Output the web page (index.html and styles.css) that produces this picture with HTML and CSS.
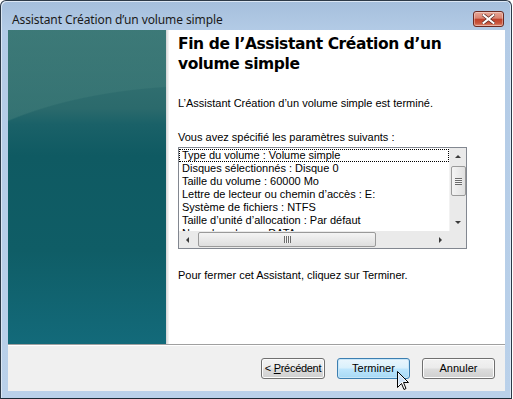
FILE: index.html
```html
<!DOCTYPE html>
<html lang="fr">
<head>
    <meta charset="UTF-8">
    <title>Assistant Création d'un volume simple</title>
    <link rel="stylesheet" href="styles.css">
</head>
<body>
    <div class="window">
        <div class="titlebar">
            <span class="title">Assistant Création d’un volume simple</span>
            <button class="close" aria-label="Fermer">
                <svg width="13" height="10" viewBox="0 0 13 10">
                    <path d="M1.5 1 L11.5 9 M11.5 1 L1.5 9" stroke="#5a2a24" stroke-width="3.4" stroke-linecap="square"/>
                    <path d="M1.5 1 L11.5 9 M11.5 1 L1.5 9" stroke="#fff" stroke-width="2" stroke-linecap="square"/>
                </svg>
            </button>
        </div>
        <div class="client">
            <div class="main">
                <div class="watermark"></div>
                <div class="content">
                    <h1>Fin de l’Assistant Création d’un volume simple</h1>
                    <p class="intro">L’Assistant Création d’un volume simple est terminé.</p>
                    <p class="label">Vous avez spécifié les paramètres suivants :</p>
                    <div class="listbox">
                        <div class="items">
                            <div class="item focused">Type du volume : Volume simple</div>
                            <div class="item">Disques sélectionnés : Disque 0</div>
                            <div class="item">Taille du volume : 60000 Mo</div>
                            <div class="item">Lettre de lecteur ou chemin d’accès : E:</div>
                            <div class="item">Système de fichiers : NTFS</div>
                            <div class="item">Taille d’unité d’allocation : Par défaut</div>
                            <div class="item">Nom du volume : DATA</div>
                        </div>
                        <div class="vscroll">
                            <span class="arrow up"></span>
                            <div class="track">
                                <div class="thumb vthumb"><span class="grip"></span></div>
                            </div>
                            <span class="arrow down"></span>
                        </div>
                        <div class="hscroll">
                            <span class="arrow left"></span>
                            <div class="htrack">
                                <div class="thumb hthumb"><span class="hgrip"></span></div>
                            </div>
                            <span class="arrow right"></span>
                        </div>
                        <div class="corner"></div>
                    </div>
                    <p class="outro">Pour fermer cet Assistant, cliquez sur Terminer.</p>
                </div>
            </div>
            <div class="buttons">
                <button class="btn back">&lt; <u>P</u>récédent</button>
                <button class="btn default">Terminer</button>
                <button class="btn">Annuler</button>
                <svg class="cursor" width="12" height="20" viewBox="0 0 12 20">
                    <path d="M0.5 0.5 L0.5 16.5 L4.5 12.5 L7 18.5 L9 17.5 L6.5 11.5 L11.5 11.5 Z" fill="#fff" stroke="#000" stroke-width="1"/>
                    <path d="M1.5 2.5 L1.5 14 L4.8 10.8 L9 10.8 Z" fill="#cfe3f7"/>
                </svg>
            </div>
        </div>
    </div>
</body>
</html>
```

FILE: styles.css
```css
body {
    margin: 0;
    width: 513px;
    height: 399px;
    background: #ffffff;
    overflow: hidden;
}
.window {
    width: 510px;
    height: 397px;
    border: 1px solid #2d3a48;
    border-bottom-color: #1b2a36;
    border-radius: 6px 6px 0 0;
    background: linear-gradient(to bottom, #a5bfdc 0px, #b3cbe6 30px, #bad1ea 100%);
    box-shadow: inset 1px 1px 0 #dbe7f4, inset -1px 0 0 #dbe7f4;
    display: flex;
    flex-direction: column;
}
.titlebar {
    height: 29px;
    display: flex;
    justify-content: space-between;
    align-items: flex-start;
    padding: 0 7px 0 11px;
}
.title {
    font-family: "Noto Sans", "Open Sans", sans-serif;
    font-size: 12px;
    color: #1a1a1a;
    margin-top: 10px;
    letter-spacing: -0.1px;
}
.close {
    width: 31px;
    height: 16px;
    margin-top: 10px;
    padding: 0;
    border: 1px solid #6b2a22;
    border-radius: 3px;
    background: linear-gradient(to bottom, #e8a796 0%, #d98371 45%, #c0402a 50%, #c8553c 80%, #e3917a 100%);
    box-shadow: inset 0 0 0 1px rgba(255, 255, 255, 0.35);
    display: flex;
    align-items: center;
    justify-content: center;
}
.client {
    margin: 0 6px 0 7px;
    height: 361px;
    background: #f0f0f0;
    display: flex;
    flex-direction: column;
}
.main {
    height: 314px;
    background: #ffffff;
    display: flex;
    border-bottom: 1px solid #a0a0a0;
    box-shadow: 0 1px 0 #ffffff;
}
/* teal bitmap on the left, lighter top part cut by a wide arc */
.watermark {
    width: 158px;
    flex: none;
    background:
        radial-gradient(ellipse 280px 117px at 200px 172px, rgba(0,0,0,0) 99%, rgba(61,122,120,0.6) 100%) top left / 158px 140px no-repeat,
        linear-gradient(to bottom, #3c7877 0%, #2b6a6c 25%, #1a6168 30%, #0f5a62 40%, #0f5d66 70%, #136a7a 100%);
    box-shadow: 1px 0 0 #d8d8d8, 2px 0 0 #e6e6e6, 3px 0 0 #f2f2f2;
}
.content {
    flex: 1;
    padding: 4px 20px 0 12px;
    font-family: "Liberation Sans", Arial, sans-serif;
    font-size: 11px;
    color: #000;
}
h1 {
    font-family: "DejaVu Sans", Verdana, sans-serif;
    font-size: 15.5px;
    font-weight: bold;
    line-height: 20px;
    margin: 0;
    letter-spacing: -0.4px;
}
.intro {
    margin: 23px 0 0;
    line-height: 13px;
}
.label {
    margin: 21px 0 0;
    line-height: 13px;
}
.listbox {
    margin-top: 3px;
    width: 287px;
    height: 100px;
    border: 1px solid #828790;
    display: grid;
    grid-template-columns: 1fr 17px;
    grid-template-rows: 1fr 17px;
    background: #fff;
}
.items {
    overflow: hidden;
    line-height: 13px;
    padding-top: 1px;
}
.item {
    padding-left: 3px;
    white-space: nowrap;
    height: 13px;
}
.focused {
    outline: 1px dotted #000;
    outline-offset: -1px;
}
.vscroll {
    background: #eaeaea;
    display: flex;
    flex-direction: column;
    align-items: center;
    border-left: 1px solid #f2f2f2;
}
.hscroll {
    background: #eaeaea;
    display: flex;
    align-items: center;
}
.corner {
    background: #eaeaea;
}
.arrow {
    width: 0;
    height: 0;
    flex: none;
}
.up {
    margin: 7px 0 6px;
    border-left: 3px solid transparent;
    border-right: 3px solid transparent;
    border-bottom: 3px solid #3b3b3b;
}
.down {
    margin: 6px 0 7px;
    border-left: 3px solid transparent;
    border-right: 3px solid transparent;
    border-top: 3px solid #3b3b3b;
}
.left {
    margin: 0 6px 0 7px;
    border-top: 3px solid transparent;
    border-bottom: 3px solid transparent;
    border-right: 3px solid #3b3b3b;
}
.right {
    margin: 0 7px 0 6px;
    border-top: 3px solid transparent;
    border-bottom: 3px solid transparent;
    border-left: 3px solid #3b3b3b;
}
.track {
    flex: 1;
    width: 100%;
    padding-top: 2px;
}
.htrack {
    flex: 1;
    height: 100%;
    padding: 1px 0;
    box-sizing: border-box;
}
.thumb {
    border: 1px solid #9a9a9a;
    border-radius: 2px;
    background: linear-gradient(to right, #f4f4f4, #e0e0e0);
    display: flex;
    align-items: center;
    justify-content: center;
    box-sizing: border-box;
}
.vthumb {
    width: 15px;
    height: 30px;
    margin: 0 auto;
}
.hthumb {
    width: 178px;
    height: 15px;
    margin-left: 3px;
    background: linear-gradient(to bottom, #f4f4f4, #dedede);
}
.grip {
    width: 7px;
    height: 7px;
    background: repeating-linear-gradient(to bottom, #6b6b6b 0 1px, #f4f4f4 1px 2px);
}
.hgrip {
    width: 7px;
    height: 7px;
    background: repeating-linear-gradient(to right, #6b6b6b 0 1px, #f4f4f4 1px 2px);
}
.outro {
    margin: 20px 0 0;
    line-height: 13px;
}
.buttons {
    flex: 1;
    display: flex;
    justify-content: flex-end;
    align-items: center;
    gap: 12px;
    padding: 0 10px 0 0;
    position: relative;
}
.btn {
    height: 21px;
    width: 73px;
    padding: 0;
    font-family: "Liberation Sans", Arial, sans-serif;
    font-size: 11px;
    color: #000;
    border: 1px solid #707070;
    border-radius: 3px;
    background: linear-gradient(to bottom, #f2f2f2 0%, #ebebeb 48%, #dddddd 52%, #cfcfcf 100%);
    box-shadow: inset 0 0 0 1px #fcfcfc;
}
.back {
    width: 64px;
    letter-spacing: -0.3px;
}
.btn u {
    text-decoration: underline;
}
.default {
    border-color: #3c7fb1;
    background: linear-gradient(to bottom, #eaf6fd 0%, #d9f0fc 48%, #bee6fd 52%, #a7d9f5 100%);
    box-shadow: inset 0 0 0 1px #c8e6f8;
}
.cursor {
    position: absolute;
    left: 389px;
    top: 26px;
}
```
